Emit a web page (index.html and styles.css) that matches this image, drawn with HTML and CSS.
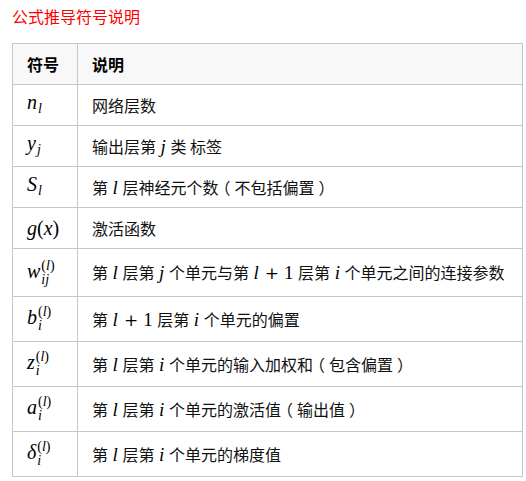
FILE: index.html
```html
<!DOCTYPE html>
<html lang="zh">
<head>
<meta charset="utf-8">
<link rel="stylesheet" href="styles.css">
</head>
<body>
<p class="title">公式推导符号说明</p>
<table class="tbl">
  <thead>
    <tr class="r-head"><th class="c1">符号</th><th>说明</th></tr>
  </thead>
  <tbody>
    <tr class="r41"><td class="c1"><span class="m">n</span><sub class="m sb">l</sub></td><td>网络层数</td></tr>
    <tr class="r41"><td class="c1"><span class="m">y</span><sub class="m sb">j</sub></td><td>输出层第 <span class="mi">j</span> 类 标签</td></tr>
    <tr class="r41"><td class="c1"><span class="m">S</span><sub class="m sb">l</sub></td><td>第 <span class="mi">l</span> 层神经元个数<span class="par">（</span>不包括偏置<span class="par">）</span></td></tr>
    <tr class="r41"><td class="c1"><span class="m">g</span><span class="mu">(</span><span class="m">x</span><span class="mu">)</span></td><td>激活函数</td></tr>
    <tr class="r48"><td class="c1"><span class="m">w</span><span class="ss"><span class="sup">(<i>l</i>)</span><span class="sub"><i>ij</i></span></span></td><td>第 <span class="mi">l</span> 层第 <span class="mi">j</span> 个单元与第 <span class="mi">l</span><span class="op">+</span><span class="mu2">1</span> 层第 <span class="mi">i</span> 个单元之间的连接参数</td></tr>
    <tr class="r45"><td class="c1"><span class="m">b</span><span class="ss"><span class="sup">(<i>l</i>)</span><span class="sub"><i>i</i></span></span></td><td>第 <span class="mi">l</span><span class="op">+</span><span class="mu2">1</span> 层第 <span class="mi">i</span> 个单元的偏置</td></tr>
    <tr class="r45"><td class="c1"><span class="m">z</span><span class="ss"><span class="sup">(<i>l</i>)</span><span class="sub"><i>i</i></span></span></td><td>第 <span class="mi">l</span> 层第 <span class="mi">i</span> 个单元的输入加权和<span class="par">（</span>包含偏置<span class="par">）</span></td></tr>
    <tr class="r45"><td class="c1"><span class="m">a</span><span class="ss"><span class="sup">(<i>l</i>)</span><span class="sub"><i>i</i></span></span></td><td>第 <span class="mi">l</span> 层第 <span class="mi">i</span> 个单元的激活值<span class="par">（</span>输出值<span class="par">）</span></td></tr>
    <tr class="r45"><td class="c1"><span class="m">δ</span><span class="ss"><span class="sup">(<i>l</i>)</span><span class="sub"><i>i</i></span></span></td><td>第 <span class="mi">l</span> 层第 <span class="mi">i</span> 个单元的梯度值</td></tr>
  </tbody>
</table>
</body>
</html>
```
FILE: styles.css
```css
html, body {
  margin: 0;
  padding: 0;
  background: #fff;
}
body {
  padding: 5px 12px 0 12px;
  font-family: "Noto Sans CJK SC", "Liberation Sans", sans-serif;
  font-size: 16px;
  color: #111;
}
.title {
  margin: 0 0 16px 0;
  color: #ff0000;
  font-size: 16px;
  line-height: 22px;
}
.tbl {
  border-collapse: collapse;
  width: 511px;
  border: 1px solid #c6c6c6;
}
.tbl th, .tbl td {
  border: 1px solid #c6c6c6;
  text-align: left;
  padding: 0 0 0 14px;
  vertical-align: middle;
  white-space: nowrap;
  line-height: 22px;
}
.tbl th {
  background: #f8f8f8;
  font-weight: bold;
  color: #000;
}
.c1 {
  width: 50px;
}
.r-head { height: 41px; }
.r41 { height: 41px; }
.r48 { height: 48px; }
.r45 { height: 45px; }
.m {
  font-family: "Liberation Serif", serif;
  font-style: italic;
  font-size: 20px;
  color: #000;
}
.mu {
  font-family: "Liberation Serif", serif;
  font-size: 20px;
  color: #000;
}
.sb {
  font-size: 14px;
  vertical-align: -4px;
  margin-left: 1px;
}
.mi {
  font-family: "Liberation Serif", serif;
  font-style: italic;
  font-size: 19px;
  color: #000;
  margin: 0 1px;
}
.op {
  font-family: "DejaVu Serif", serif;
  font-size: 17px;
  color: #000;
  margin: 0 5px;
}
.mu2 {
  font-family: "Liberation Serif", serif;
  font-size: 19px;
  color: #000;
  margin-right: 1px;
}
.par {
  font-feature-settings: "halt";
  padding: 0 4px;
}
.ss {
  display: inline-flex;
  flex-direction: column;
  vertical-align: 8px;
  margin-left: 1px;
  font-family: "Liberation Serif", serif;
  font-size: 14px;
  line-height: 14px;
  color: #000;
}
.ss i { font-style: italic; }
.sup { display: block; }
.sub { display: block; }
```
